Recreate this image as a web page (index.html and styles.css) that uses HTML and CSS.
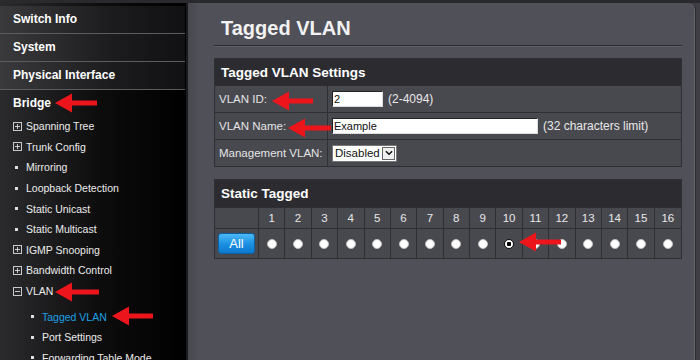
FILE: index.html
```html
<!DOCTYPE html>
<html lang="en">
<head>
  <meta charset="UTF-8" />
  <title>Tagged VLAN</title>
  <link rel="stylesheet" href="styles.css">
</head>
<body>

  <div class="layout">
    <!-- Menu lateral -->
    <nav class="sidebar">
      <div class="menu-top">Switch Info</div>
      <div class="menu-top">System</div>
      <div class="menu-top">Physical Interface</div>
      <div class="menu-top menu-open">Bridge</div>

      <ul class="sub">
        <li><svg class="tree-box" viewBox="0 0 9 9"><rect x="0.5" y="0.5" width="8" height="8"/><path d="M2 4.5h5M4.5 2v5"/></svg>Spanning Tree</li>
        <li><svg class="tree-box" viewBox="0 0 9 9"><rect x="0.5" y="0.5" width="8" height="8"/><path d="M2 4.5h5M4.5 2v5"/></svg>Trunk Config</li>
        <li><span class="dot"></span>Mirroring</li>
        <li><span class="dot"></span>Loopback Detection</li>
        <li><span class="dot"></span>Static Unicast</li>
        <li><span class="dot"></span>Static Multicast</li>
        <li><svg class="tree-box" viewBox="0 0 9 9"><rect x="0.5" y="0.5" width="8" height="8"/><path d="M2 4.5h5M4.5 2v5"/></svg>IGMP Snooping</li>
        <li><svg class="tree-box" viewBox="0 0 9 9"><rect x="0.5" y="0.5" width="8" height="8"/><path d="M2 4.5h5M4.5 2v5"/></svg>Bandwidth Control</li>
        <li><svg class="tree-box" viewBox="0 0 9 9"><rect x="0.5" y="0.5" width="8" height="8"/><path d="M2 4.5h5"/></svg>VLAN</li>
      </ul>

      <ul class="sub sub-deep">
        <li class="current"><span class="dot"></span>Tagged VLAN</li>
        <li><span class="dot"></span>Port Settings</li>
        <li><span class="dot"></span>Forwarding Table Mode</li>
      </ul>
    </nav>

    <!-- Conteudo -->
    <main class="panel">
      <h1 class="page-title">Tagged VLAN</h1>

      <section class="box">
        <div class="box-head">Tagged VLAN Settings</div>
        <div class="form-row">
          <div class="form-label">VLAN ID:</div>
          <div class="form-value">
            <span class="field field-id">2</span>
            <span class="hint">(2-4094)</span>
          </div>
        </div>
        <div class="form-row">
          <div class="form-label">VLAN Name:</div>
          <div class="form-value">
            <span class="field field-name">Example</span>
            <span class="hint">(32 characters limit)</span>
          </div>
        </div>
        <div class="form-row">
          <div class="form-label">Management VLAN:</div>
          <div class="form-value">
            <span class="select">Disabled<span class="select-arrow"><svg viewBox="0 0 9 6"><path d="M1 1l3.5 3.5L8 1"/></svg></span></span>
          </div>
        </div>
      </section>

      <section class="box">
        <div class="box-head box-head-tall">Static Tagged</div>
        <div class="ports">
          <div class="port-num"></div>
          <div class="port-num">1</div>
          <div class="port-num">2</div>
          <div class="port-num">3</div>
          <div class="port-num">4</div>
          <div class="port-num">5</div>
          <div class="port-num">6</div>
          <div class="port-num">7</div>
          <div class="port-num">8</div>
          <div class="port-num">9</div>
          <div class="port-num">10</div>
          <div class="port-num">11</div>
          <div class="port-num">12</div>
          <div class="port-num">13</div>
          <div class="port-num">14</div>
          <div class="port-num">15</div>
          <div class="port-num">16</div>

          <div class="port-cell"><span class="btn-all">All</span></div>
          <div class="port-cell"><span class="radio"></span></div>
          <div class="port-cell"><span class="radio"></span></div>
          <div class="port-cell"><span class="radio"></span></div>
          <div class="port-cell"><span class="radio"></span></div>
          <div class="port-cell"><span class="radio"></span></div>
          <div class="port-cell"><span class="radio"></span></div>
          <div class="port-cell"><span class="radio"></span></div>
          <div class="port-cell"><span class="radio"></span></div>
          <div class="port-cell"><span class="radio"></span></div>
          <div class="port-cell"><span class="radio radio-on"></span></div>
          <div class="port-cell"><span class="radio"></span></div>
          <div class="port-cell"><span class="radio"></span></div>
          <div class="port-cell"><span class="radio"></span></div>
          <div class="port-cell"><span class="radio"></span></div>
          <div class="port-cell"><span class="radio"></span></div>
          <div class="port-cell"><span class="radio"></span></div>
        </div>
      </section>
    </main>
  </div>

  <!-- Setas de anotacao -->
  <svg class="arrows" viewBox="0 0 700 360">
    <polygon points="55,103 72,93.5 72,100.5 97,100.5 97,105.5 72,105.5 72,112.5"/>
    <polygon points="55,292 72,282.5 72,289.5 99,289.5 99,294.5 72,294.5 72,301.5"/>
    <polygon points="112,316 129,306.5 129,313.5 153,313.5 153,318.5 129,318.5 129,325.5"/>
    <polygon points="272,101 289,91.5 289,98.5 313,98.5 313,103.5 289,103.5 289,110.5"/>
    <polygon points="288,128 305,118.5 305,125.5 331,125.5 331,130.5 305,130.5 305,137.5"/>
    <polygon points="519,242 536,232.5 536,239.5 561,239.5 561,244.5 536,244.5 536,251.5"/>
  </svg>

</body>
</html>
```

FILE: styles.css
```css
:root {
  --panel: #505058;
  --row: #48484f;
  --head: #2b2b30;
  --line: #2e2e33;
  --text: #e6e6e6;
  --blue: #1ea0e6;
  --font-main: "Liberation Sans", Arial, sans-serif;
}

* {
  margin: 0;
  padding: 0;
  box-sizing: border-box;
}

body {
  width: 700px;
  height: 360px;
  overflow: hidden;
  position: relative;
  font-family: var(--font-main);
  color: var(--text);
  background-color: #3e3e44;
}

.layout {
  display: flex;
  height: 360px;
  border-top: 3px solid #2a2a2e;
}

/* Sidebar */
.sidebar {
  width: 188px;
  flex: 0 0 188px;
  background: linear-gradient(to right, #2b2b2d, #0c0c0d 55%, #000);
  border-right: 2px solid #1a1a1c;
  padding-top: 3px;
}

.menu-top {
  height: 28px;
  line-height: 27px;
  padding-left: 13px;
  font-size: 12px;
  font-weight: bold;
  color: #fff;
  background: linear-gradient(to right, #3a3a3d, #1c1c1e 60%, #111113);
  border-bottom: 1px solid #5c5c60;
  margin-right: 1px;
}

.menu-open {
  background: none;
  border-bottom: none;
  height: 26px;
}

.sub {
  list-style: none;
}

.sub li {
  height: 20.6px;
  display: flex;
  align-items: center;
  padding-left: 13px;
  font-size: 10.5px;
  color: #ececec;
}

.sub-deep {
  margin-top: 5px;
}

.sub-deep li {
  padding-left: 29px;
}

.sub li.current {
  color: var(--blue);
}

.tree-box {
  width: 9px;
  height: 9px;
  margin-right: 4px;
  fill: #2a2a2c;
  stroke: #c8c8c8;
  stroke-width: 1;
}

.dot {
  width: 3px;
  height: 3px;
  background: #e0e0e0;
  margin: 0 8px 0 2px;
}

/* Content */
.panel {
  flex: 1;
  margin-right: 4px;
  background: linear-gradient(to right, #48484f, var(--panel) 12px);
  border-top-right-radius: 7px;
  border-right: 1px solid #2a2a2e;
  box-shadow: inset -1px 0 0 #65656c;
  padding: 13px 13px 0 26px;
}

.page-title {
  font-size: 20px;
  line-height: 24px;
  font-weight: bold;
  color: #f2f2f2;
  padding: 0 0 5px 7px;
  border-bottom: 1px solid #2a2a2e;
  box-shadow: 0 1px 0 #5e5e66;
  margin-bottom: 12px;
}

.box {
  width: 468px;
  border: 1px solid var(--line);
  background: var(--row);
  margin-bottom: 12px;
}

.box-head {
  height: 26px;
  line-height: 27px;
  padding-left: 6px;
  background: var(--head);
  font-size: 13.5px;
  font-weight: bold;
  color: #fff;
}

.box-head-tall {
  height: 27px;
  line-height: 28px;
}

.form-row {
  display: flex;
  height: 27px;
  border-top: 1px solid var(--line);
}

.form-label {
  width: 113px;
  border-right: 1px solid var(--line);
  padding-left: 4px;
  display: flex;
  align-items: center;
  font-size: 11.5px;
  color: #e4e4e4;
}

.form-value {
  display: flex;
  align-items: center;
  padding-left: 4px;
  font-size: 12px;
}

.field {
  height: 16px;
  background: #fff;
  color: #111;
  border: 1px solid #222;
  border-right-color: #ddd;
  border-bottom-color: #ddd;
  font-size: 11px;
  line-height: 14px;
  padding-left: 1px;
}

.field-id {
  width: 51px;
}

.field-name {
  width: 206px;
}

.hint {
  margin-left: 5px;
  color: #e8e8e8;
}

.select {
  display: flex;
  align-items: center;
  height: 17px;
  width: 65px;
  background: #fff;
  color: #111;
  border: 1px solid #777;
  font-size: 11.5px;
  padding-left: 2px;
  justify-content: space-between;
}

.select-arrow {
  width: 13px;
  height: 13px;
  margin-right: 1px;
  border: 1px solid #666;
  background: #f0f0f0;
  display: flex;
  align-items: center;
  justify-content: center;
}

.select-arrow svg {
  width: 8px;
  height: 6px;
  fill: none;
  stroke: #111;
  stroke-width: 1.6;
}

/* Port grid */
.ports {
  display: grid;
  grid-template-columns: 44px repeat(16, 1fr);
  grid-template-rows: 21px 30px;
}

.port-num,
.port-cell {
  border-top: 1px solid var(--line);
  border-right: 1px solid var(--line);
  display: flex;
  align-items: center;
  justify-content: center;
}

.port-num {
  font-size: 11.5px;
  color: #e8e8e8;
}

.ports > div:nth-child(17),
.ports > div:nth-child(34) {
  border-right: none;
}

.btn-all {
  width: 37px;
  height: 21px;
  border-radius: 3px;
  border: 1px solid #0b5fa3;
  background: linear-gradient(to bottom, #4cb8f6, #1a8ee0 55%, #0d7bcf);
  color: #fff;
  font-size: 13px;
  display: flex;
  align-items: center;
  justify-content: center;
}

.radio {
  width: 10px;
  height: 10px;
  border-radius: 50%;
  background: #fff;
  border: 1px solid #bdbdbd;
}

.radio-on {
  border: 1px solid #111;
  background: radial-gradient(circle, #000 0 2px, #fff 2.5px);
}

/* Anotacoes */
.arrows {
  position: absolute;
  top: 0;
  left: 0;
  width: 700px;
  height: 360px;
  pointer-events: none;
  fill: #ec151c;
}
```
